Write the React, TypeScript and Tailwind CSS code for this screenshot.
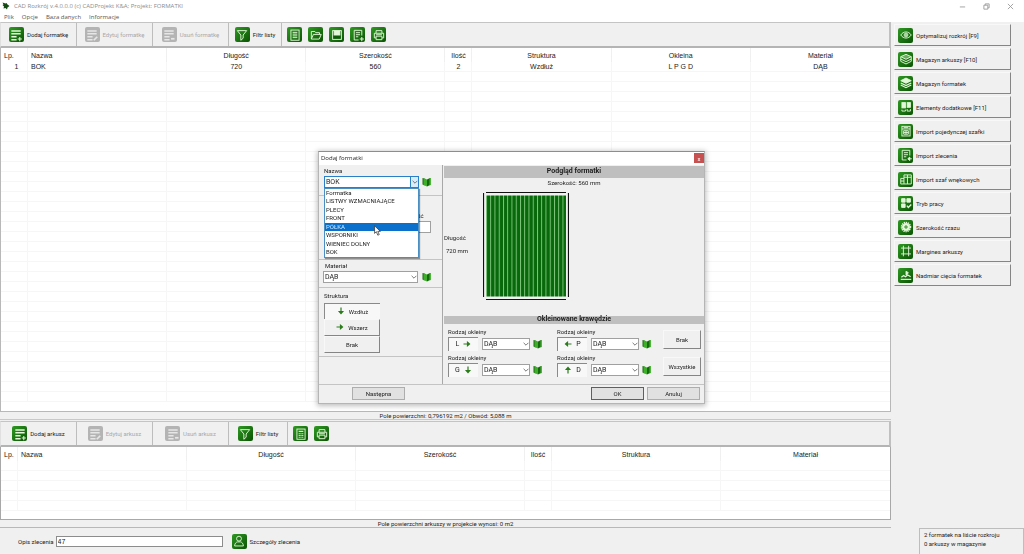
import React from 'react';

type IconName =
  | 'listPlus' | 'listEdit' | 'listRemove' | 'filter' | 'list' | 'folder' | 'save' | 'docPlus' | 'print' | 'calc'
  | 'eye' | 'layers' | 'layersFull' | 'elements' | 'cabinet' | 'import' | 'wardrobe' | 'mode' | 'blade'
  | 'margins' | 'saw' | 'user';

const lines = <path d="M4 5h16M4 10h16M4 15h9M4 20h9" />;

const glyphs: Record<IconName, React.ReactNode> = {
  listPlus: <g strokeWidth="2.6">{lines}<path d="M15 19h7M18.500 15.500v7" strokeWidth="1.8" /></g>,
  listEdit: <g strokeWidth="2.6">{lines}<path d="M15 21l6-6" strokeWidth="3" /></g>,
  listRemove: <g strokeWidth="2.6">{lines}<path d="M15.500 18.500h6" strokeWidth="3" /></g>,
  filter: <path d="M4 4.500h16l-6 7.500v5.500l-4 3.500V12z" />,
  list: <><rect x="5" y="3.500" width="14" height="17.500" /><path d="M8 7.500h8M8 10.500h8M8 13.500h8M8 16.500h8" /></>,
  folder: <path d="M4 19V6h6l1.500 2H18v3M4 19l3.500-8H21l-3.500 8z" />,
  save: <><rect x="4.500" y="4.500" width="15" height="15" fill="#0f5c08" /><rect x="7" y="5" width="10" height="7" fill="currentColor" /></>,
  docPlus: <><path d="M18.500 13V4H5.500v16.500H13M8.500 8h7M8.500 11.500h7M8.500 15h4" /><path d="M15 19h7M18.500 15.500v7" strokeWidth="1.8" /></>,
  print: <><path d="M7 9V4.500h10V9M7 17H4V9h16v8h-3" /><path d="M7 14h10v6H7zM7 11.500h10" /></>,
  calc: <><rect x="5" y="3.500" width="14" height="17.500" /><path d="M8 7.500h8" strokeWidth="2" /><path d="M8 11.500h8M8 14.500h8M8 17.500h8" strokeDasharray="2 1" strokeWidth="2" /></>,
  eye: <><path d="M3 12c4.500-7 13.500-7 18 0-4.500 7-13.500 7-18 0z" /><circle cx="12" cy="12" r="3.200" /><circle cx="12" cy="12" r="1" fill="currentColor" /></>,
  layers: <><path d="M12 4l9 4-9 4.500L3 8z" fill="currentColor" fillOpacity=".4" /><path d="M3 8v8l9 4.500 9-4.500V8M3 12l9 4.500 9-4.500" /></>,
  layersFull: <><path d="M12 3.500l9 4.500-9 4.500L3 8z" fill="currentColor" /><path d="M3 12l9 4.500 9-4.500M3 15.500l9 4.500 9-4.500" strokeWidth="2" /></>,
  elements: <><rect x="5" y="4.500" width="6" height="9" fill="currentColor" /><rect x="14" y="4.500" width="5.500" height="8" fill="currentColor" /><path d="M19.500 15.500V19H14v-3.500M5 16.500V19h6v-2.500" /></>,
  cabinet: <><rect x="5" y="4" width="14" height="16.500" /><path d="M5 8.500h14M8 6.200h8M8 11.500h8v6H8zM12 11.500v6M8 14.500h8" /></>,
  import: <><path d="M18.500 13V4H5.500v16.500H13M8.500 8h7M8.500 11.500h7M8.500 15h4" /><path d="M22 18.500h-6M18.500 15.500l-3.500 3 3.500 3z" fill="currentColor" /></>,
  wardrobe: <path d="M8.500 20.500V5H21v15.500zM14.500 5v15.500M8.500 9H21M3 11h5.500M3 11v9.500h5.500M3 15.500h5.500" />,
  mode: <><path d="M4.500 4.500h6v6h-6zM13.500 4.500h6v6h-6zM4.500 13.500h6v6h-6z" fill="currentColor" /><path d="M13.500 16.500l2.500 3 5-5" strokeWidth="2.400" /></>,
  blade: <><circle cx="12" cy="12" r="7.500" strokeDasharray="2.200 1.200" strokeWidth="3" /><circle cx="12" cy="12" r="6" fill="currentColor" /><circle cx="12" cy="12" r="2" stroke="#1c7a10" /></>,
  margins: <path d="M7.500 3v18M16.500 3v18M3.500 7h17M3.500 17h17" />,
  saw: <><path d="M3 19.500h18" strokeWidth="2" /><path d="M4 16l4-3 3 2 4-3 5 3" strokeWidth="2.200" /><path d="M12 12V5.500l4 2.500-3 4z" fill="currentColor" /></>,
  user: <><circle cx="12" cy="8" r="4.200" /><path d="M4.500 20.500c0-4 2.500-6.500 5-7h5c2.500.5 5 3 5 7z" /></>,
};

function Tile({ name, muted = false }: { name: IconName; muted?: boolean }) {
  return (
    <span
      className={
        muted
          ? 'flex size-[15px] shrink-0 items-center justify-center rounded-[2px] bg-[#b4b4b4] text-[#e6e6e6]'
          : 'flex size-[15px] shrink-0 items-center justify-center rounded-[2px] bg-linear-to-br from-[#2f9a22] to-[#0b5405] text-[#e2f8d8]'
      }
    >
      <svg viewBox="0 0 24 24" className="size-[14px]" fill="none" stroke="currentColor" strokeWidth="1.6" aria-hidden="true">
        {glyphs[name]}
      </svg>
    </span>
  );
}

function Book() {
  return (
    <button type="button" aria-label="Katalog" className="flex h-3 w-[10px] shrink-0 items-center">
      <svg viewBox="0 0 20 20" className="size-[10px]" aria-hidden="true">
        <path d="M1 2l4 1v14l-4-2z" fill="#1d6b12" />
        <path d="M3 2l7 3v14l-7-3z" fill="#3fae2b" />
        <path d="M10 5l6-3v14l-6 3z" fill="#15690c" />
        <path d="M15 2l3 0v14l-3 1z" fill="#4cb637" />
      </svg>
    </button>
  );
}

function Arrow({ dir }: { dir: 'up' | 'down' | 'left' | 'right' }) {
  const d = {
    up: 'M8 15V3M4.500 7L8 3l3.500 4z',
    down: 'M8 1v12M4.500 9L8 13l3.500-4z',
    left: 'M15 8H3M7 4.500L3 8l4 3.500z',
    right: 'M1 8h12M9 4.500L13 8l-4 3.500z',
  }[dir];
  return (
    <svg viewBox="0 0 16 16" className="size-2 shrink-0" fill="#2b7d1c" stroke="#2b7d1c" strokeWidth="2.4" aria-hidden="true">
      <path d={d} />
    </svg>
  );
}

function Combo({ id, value, className, active = false }: { id: string; value: string; className: string; active?: boolean }) {
  return (
    <div className={`relative ${className}`}>
      <select
        id={id}
        defaultValue={value}
        className={`block h-3 w-full appearance-none border bg-white pl-px text-[7px] leading-[10px] ${active ? 'border-[#2a7fc9]' : 'border-[#a0a0a0]'}`}
      >
        <option>{value}</option>
      </select>
      <span
        className={`pointer-events-none absolute inset-y-0 right-0 flex w-[9px] items-center justify-center ${active ? 'border border-[#2a7fc9] bg-[#d9ecfa]' : ''}`}
      >
        <svg viewBox="0 0 10 10" className="size-[6px]" fill="none" stroke="#555" strokeWidth="1.3" aria-hidden="true">
          <path d="M1 3l4 4 4-4" />
        </svg>
      </span>
    </div>
  );
}

function ToolButton({ icon, label, muted = false, width = 'w-[76px]' }: { icon: IconName; label: string; muted?: boolean; width?: string }) {
  return (
    <button
      type="button"
      disabled={muted}
      className={`flex items-center justify-center gap-[3px] border-r border-[#bdbdbd] whitespace-nowrap ${width} ${muted ? 'text-[#a8a8a8]' : ''}`}
    >
      <Tile name={icon} muted={muted} />
      {label}
    </button>
  );
}

function Toolbar({ noun, filterWidth, tools }: { noun: string; filterWidth: string; tools: [IconName, string][] }) {
  return (
    <div className="flex h-[26px] shrink-0 border-t border-r-2 border-b-2 border-l border-t-[#c4c4c4] border-r-[#c0c0c0] border-b-[#b4b4b4] border-l-[#e0e0e0]">
      <ToolButton icon="listPlus" label={`Dodaj ${noun}`} />
      <ToolButton icon="listEdit" label={`Edytuj ${noun}`} muted />
      <ToolButton icon="listRemove" label={`Usuń ${noun}`} muted />
      <ToolButton icon="filter" label="Filtr listy" width={filterWidth} />
      <div className="flex items-center gap-[6px] pl-[5px]">
        {tools.map(([icon, label]) => (
          <button key={label} type="button" aria-label={label}>
            <Tile name={icon} />
          </button>
        ))}
      </div>
    </div>
  );
}

type Column = { title: string; width?: string; left?: boolean };

const partColumns: Column[] = [
  { title: 'Lp.', width: 'w-[27px]', left: true },
  { title: 'Nazwa', left: true },
  { title: 'Długość' },
  { title: 'Szerokość' },
  { title: 'Ilość', width: 'w-[27px]' },
  { title: 'Struktura' },
  { title: 'Okleina' },
  { title: 'Materiał' },
];

const sheetColumns: Column[] = [
  { title: 'Lp.', width: 'w-[17px]', left: true },
  { title: 'Nazwa', left: true },
  { title: 'Długość' },
  { title: 'Szerokość' },
  { title: 'Ilość', width: 'w-[27px]' },
  { title: 'Struktura' },
  { title: 'Materiał' },
];

function cellAlign(index: number) {
  if (index === 0) return 'pl-[5px] text-center';
  return index === 1 ? 'pl-[3px] text-left' : 'text-center';
}

function Grid({ columns, rows, blanks }: { columns: Column[]; rows: string[][]; blanks: number }) {
  const all = [...rows, ...Array.from({ length: blanks }, () => columns.map(() => ''))];
  return (
    <table className="w-full table-fixed border-separate border-spacing-0 font-['Liberation_Sans',sans-serif] text-[7px] leading-[9px]">
      <thead>
        <tr className="h-[14px]">
          {columns.map((c) => (
            <th
              key={c.title}
              className={`border-r border-[#f0f0f0] p-0 font-normal whitespace-nowrap last:border-r-0 ${c.width ?? ''} ${c.left ? 'pl-[3px] text-left' : 'text-center'}`}
            >
              {c.title}
            </th>
          ))}
        </tr>
      </thead>
      <tbody>
        {all.map((row, r) => (
          <tr key={r} className="h-[10px]">
            {row.map((cell, i) => (
              <td
                key={i}
                className={`border-r border-b border-[#f6f6f6] p-0 whitespace-nowrap last:border-r-0 ${cellAlign(i)}`}
              >
                {cell}
              </td>
            ))}
          </tr>
        ))}
      </tbody>
    </table>
  );
}

const actions: [IconName, string][] = [
  ['eye', 'Optymalizuj rozkrój [F9]'],
  ['layers', 'Magazyn arkuszy [F10]'],
  ['layersFull', 'Magazyn formatek'],
  ['elements', 'Elementy dodatkowe [F11]'],
  ['cabinet', 'Import pojedynczej szafki'],
  ['import', 'Import zlecenia'],
  ['wardrobe', 'Import szaf wnękowych'],
  ['mode', 'Tryb pracy'],
  ['blade', 'Szerokość rzazu'],
  ['margins', 'Margines arkuszy'],
  ['saw', 'Nadmiar cięcia formatek'],
];

const names = ['Formatka', 'LISTWY WZMACNIAJĄCE', 'PLECY', 'FRONT', 'PÓŁKA', 'WSPORNIKI', 'WIENIEC DOLNY', 'BOK'];

const raised = 'border border-t-[#f8f8f8] border-l-[#f8f8f8] border-r-[#858585] border-b-[#858585] bg-[#f0f0f0]';
const sunken = 'border-t border-l border-t-[#8a8a8a] border-l-[#8a8a8a] bg-[#f8f8f8]';

function Edge({ id, letter, dir }: { id: string; letter: string; dir: 'up' | 'down' | 'left' | 'right' }) {
  const first = dir === 'left' || dir === 'up';
  return (
    <div>
      <label htmlFor={id} className="block h-[10px]">Rodzaj okleiny</label>
      <div className="flex items-center">
        <button type="button" className={`flex h-[14px] w-[30px] items-center justify-center gap-1 text-[7px] ${sunken}`}>
          {first && <Arrow dir={dir} />}
          {letter}
          {!first && <Arrow dir={dir} />}
        </button>
        <Combo id={id} value="DĄB" className="mr-[3px] ml-1 w-12" />
        <Book />
      </div>
    </div>
  );
}

function PartDialog() {
  return (
    <div className="pointer-events-none fixed inset-0 flex items-center justify-center pr-px">
      <section
        role="dialog"
        aria-label="Dodaj formatki"
        className="pointer-events-auto flex w-[387px] flex-col border border-t-[#7d929c] border-r-[#b5b5b5] border-b-[#b5b5b5] border-l-[#b5b5b5] bg-[#f0f0f0] shadow-[0_1px_5px_1px_rgba(0,0,0,0.25)]"
      >
        <header className="flex h-[13px] items-center justify-between bg-white pl-[2px]">
          <h2 className="font-['Open_Sans','Noto_Sans',sans-serif]">Dodaj formatki</h2>
          <button type="button" aria-label="Zamknij" className="flex h-[10px] w-[10px] items-center justify-center bg-[#c75050] text-white">
            x
          </button>
        </header>
        <div className="flex h-[219px]">
          <div className="w-[124px] border-r border-[#a8a8a8]">
            <div className="h-[31px] border-b border-[#c4c4c4] pt-px pl-[5px]">
              <label htmlFor="name" className="block h-[10px]">Nazwa</label>
              <div className="relative flex items-center">
                <Combo id="name" value="BOK" className="mr-[3px] w-[95px]" active />
                <Book />
                <ul
                  role="listbox"
                  aria-label="Nazwa"
                  className="absolute top-3 left-0 z-10 flex h-[70px] w-[95px] flex-col border border-[#4a8fc4] bg-white shadow-[1px_1px_1px_rgba(0,0,0,0.4)]"
                >
                  {names.map((n) => (
                    <li
                      key={n}
                      role="option"
                      aria-selected={n === 'PÓŁKA'}
                      className={`flex flex-1 items-center pl-px leading-[8px] whitespace-nowrap ${n === 'PÓŁKA' ? 'bg-[#0a70cc] text-[#d6ebfa]' : ''}`}
                    >
                      {n}
                    </li>
                  ))}
                </ul>
                <svg viewBox="0 0 12 18" className="absolute top-[49px] left-[50px] z-20 h-[11px] w-[7px]" aria-hidden="true">
                  <path d="M1 1v13l3-3 2.500 6 2.500-1-2.500-5.500H11z" fill="#fff" stroke="#333" strokeWidth="1.3" />
                </svg>
              </div>
            </div>
            <div className="flex h-[64px] flex-col items-end border-b border-[#c4c4c4] pt-[15px] pr-[11px]">
              <label htmlFor="amount" className="block h-[10px] w-5">Ilość</label>
              <input id="amount" className="h-3 w-5 border border-[#a0a0a0] bg-white" />
            </div>
            <div className="h-[28px] border-b border-[#c4c4c4] pt-px pl-1">
              <label htmlFor="material" className="block h-[10px] pl-[2px]">Materiał</label>
              <div className="flex items-center">
                <Combo id="material" value="DĄB" className="mr-1 w-[95px]" />
                <Book />
              </div>
            </div>
            <div className="h-[69px] border-b border-[#c4c4c4] pt-[3px] pl-[5px]">
              <p className="h-3">Struktura</p>
              <div className="flex w-14 flex-col">
                <button type="button" className={`flex h-[16px] items-center justify-center gap-1 ${sunken}`}>
                  <Arrow dir="down" />
                  Wzdłuż
                </button>
                <button type="button" className={`flex h-[17px] items-center justify-center gap-1 ${raised}`}>
                  <Arrow dir="right" />
                  Wszerz
                </button>
                <button type="button" className={`flex h-[17px] items-center justify-center ${raised}`}>
                  Brak
                </button>
              </div>
            </div>
          </div>
          <div className="min-w-0 flex-1 pt-px pl-px">
            <h3 className="flex h-3 items-center justify-center bg-[#bfbfbf] text-[7px] font-bold">Podgląd formatki</h3>
            <p className="h-[10px] text-center leading-[9px]">Szerokość: 560 mm</p>
            <div className="flex h-[128px]">
              <div className="flex w-[39px] shrink-0 flex-col gap-[4px] pt-[45px]">
                <span>Długość</span>
                <span className="pl-[2px]">720 mm</span>
              </div>
              <svg viewBox="0 0 86 109" className="mt-[4px] h-[109px] w-[86px]" aria-hidden="true">
                <defs>
                  <pattern id="grain" width="4.25" height="10" patternUnits="userSpaceOnUse" x="3">
                    <rect width="4.25" height="10" fill="#07690a" />
                    <rect width="0.900" height="10" fill="#86c983" />
                  </pattern>
                </defs>
                <rect x="3" y="3.500" width="80" height="101" fill="url(#grain)" />
                <path d="M.5 1v104M3 .5h80M85.500 1v104M3 107.500h80" stroke="#111" strokeWidth="1.2" />
              </svg>
            </div>
            <h3 className="flex h-2 items-center justify-center bg-[#bfbfbf] text-[7px] font-bold">Okleinowane krawędzie</h3>
            <div className="flex justify-between pt-[3px] pr-[3px] pl-1">
              <div className="grid grid-cols-2 gap-x-[14px] gap-y-[2px]">
                <Edge id="edge-l" letter="L" dir="right" />
                <Edge id="edge-p" letter="P" dir="left" />
                <Edge id="edge-g" letter="G" dir="down" />
                <Edge id="edge-d" letter="D" dir="up" />
              </div>
              <div className="flex flex-col gap-2 pt-[3px]">
                <button type="button" className={`h-[19px] w-[38px] ${raised}`}>Brak</button>
                <button type="button" className={`h-[19px] w-[38px] ${raised}`}>Wszystkie</button>
              </div>
            </div>
          </div>
        </div>
        <footer className="flex h-[19px] items-center border-t border-[#c4c4c4] pr-1 pl-[33px]">
          <button type="button" className="h-[13px] w-[53px] border border-[#adadad] bg-[#e1e1e1]">Następna</button>
          <button type="button" className="mr-[3px] ml-auto h-[13px] w-[53px] border border-[#0078d7] bg-[#e1e1e1]">OK</button>
          <button type="button" className="h-[13px] w-[53px] border border-[#adadad] bg-[#e1e1e1]">Anuluj</button>
        </footer>
      </section>
    </div>
  );
}

export default function App() {
  return (
    <div className="flex h-screen flex-col overflow-hidden bg-[#f0f0f0] font-['Roboto','Liberation_Sans',sans-serif] text-[6px] leading-[9px] text-[#222]">
      <header className="bg-white font-['Open_Sans','Noto_Sans',sans-serif]">
        <div className="flex h-3 items-center gap-1 pl-[2px] text-[#8c8c8c]">
          <svg viewBox="0 0 16 16" className="size-2" fill="#124a12" aria-hidden="true">
            <path d="M1 1l6 2 2-1 2 3 4 3-4 3-1 4-3-3-4 1 1-4-3-3 2-1z" />
          </svg>
          <h1>CAD Rozkrój v.4.0.0.0 (c) CADProjekt K&amp;A; Projekt: FORMATKI</h1>
          <div className="ml-auto flex items-center gap-[17px] pr-[10px]">
            <button type="button" aria-label="Minimalizuj"><svg viewBox="0 0 8 8" className="size-[7px]" stroke="#999" aria-hidden="true"><path d="M1 4.500h6" /></svg></button>
            <button type="button" aria-label="Przywróć"><svg viewBox="0 0 8 8" className="size-[7px]" stroke="#999" fill="none" aria-hidden="true"><path d="M1 2.500h4.500V7H1zM2.500 2.500V1H7v4.500H5.500" /></svg></button>
            <button type="button" aria-label="Zamknij program"><svg viewBox="0 0 8 8" className="size-[7px]" stroke="#999" aria-hidden="true"><path d="M1 1l6 6M7 1L1 7" /></svg></button>
          </div>
        </div>
        <nav className="flex h-[10px] items-center gap-2 pl-1 text-[#555]">
          {['Plik', 'Opcje', 'Baza danych', 'Informacje'].map((m) => (
            <a key={m} href="#">{m}</a>
          ))}
        </nav>
      </header>

      <div className="flex min-h-0 flex-1">
        <main className="flex min-w-0 flex-1 flex-col">
          <Toolbar
            noun="formatkę"
            filterWidth="w-[53px]"
            tools={[['list', 'Lista'], ['folder', 'Otwórz'], ['save', 'Zapisz'], ['docPlus', 'Dodaj listę'], ['print', 'Drukuj']]}
          />
          <div className="min-h-0 flex-1 overflow-hidden border-r border-b border-l border-[#b8b8b8] bg-white">
            <Grid
              columns={partColumns}
              rows={[['1', 'BOK', '720', '560', '2', 'Wzdłuż', 'L P G D', 'DĄB']]}
              blanks={33}
            />
          </div>
          <p className="h-2 shrink-0 border-b border-[#c8c8c8] text-center leading-[8px]">Pole powierzchni: 0,796192 m2 / Obwód: 5,088 m</p>
          <div className="h-px shrink-0" />
          <Toolbar noun="arkusz" filterWidth="w-[59px]" tools={[['calc', 'Kalkulator'], ['print', 'Drukuj arkusze']]} />
          <div className="h-[73px] shrink-0 overflow-hidden border-r border-b border-l border-[#a8a8a8] bg-white">
            <Grid columns={sheetColumns} rows={[]} blanks={5} />
          </div>
          <p className="h-2 shrink-0 border-b border-[#b8b8b8] text-center leading-[8px]">Pole powierzchni arkuszy w projekcie wynosi: 0 m2</p>
        </main>
        <aside className="flex w-[133px] shrink-0 flex-col gap-[2px] pt-[2px] pl-[3px]">
          {actions.map(([icon, label]) => (
            <button key={label} type="button" className={`flex h-[22px] w-[117px] items-center gap-[3px] pl-[3px] whitespace-nowrap ${raised}`}>
              <Tile name={icon} />
              {label}
            </button>
          ))}
        </aside>
      </div>

      <footer className="flex h-[26px] shrink-0">
        <div className="flex items-center pl-[18px]">
          <label htmlFor="order">Opis zlecenia</label>
          <input id="order" defaultValue="47" className="mr-[9px] ml-[2px] h-[11px] w-[167px] border border-[#8c8c8c] bg-white pl-px font-['Liberation_Sans',sans-serif] text-[7px]" />
          <button type="button" className="flex items-center gap-[3px]">
            <Tile name="user" />
            Szczegóły zlecenia
          </button>
        </div>
        <div className="ml-auto w-[105px] border border-b-0 border-[#bdbdbd] pt-px pl-1">
          <p>2 formatek na liście rozkroju</p>
          <p>0 arkuszy w magazynie</p>
        </div>
      </footer>

      <PartDialog />
    </div>
  );
}
